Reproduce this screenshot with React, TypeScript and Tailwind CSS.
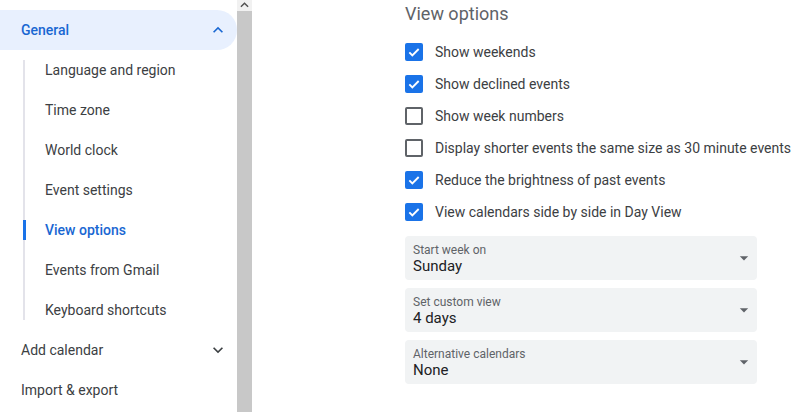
const font = { fontFamily: 'Roboto, "Noto Sans", Arial, sans-serif' }

function Chevron({ up, className }: { up?: boolean; className?: string }) {
  return (
    <svg viewBox="0 0 24 24" width="20" height="20" className={className} fill="currentColor">
      {up ? (
        <path d="M12 8l-6 6 1.41 1.41L12 10.83l4.59 4.58L18 14z" />
      ) : (
        <path d="M16.59 8.59L12 13.17 7.41 8.59 6 10l6 6 6-6z" />
      )}
    </svg>
  )
}

function Checkbox({ checked }: { checked: boolean }) {
  if (checked) {
    return (
      <div className="w-[18px] h-[18px] rounded-[2px] bg-[#1a73e8] flex items-center justify-center shrink-0">
        <svg viewBox="0 0 24 24" width="16" height="16" fill="none" stroke="white" strokeWidth="2.8">
          <path d="M5 12.5l4.5 4.5L19 7.5" />
        </svg>
      </div>
    )
  }
  return <div className="w-[18px] h-[18px] rounded-[2px] border-2 border-[#5f6368] shrink-0" />
}

function Select({ label, value }: { label: string; value: string }) {
  return (
    <div className="w-[352px] h-[44px] rounded-[4px] bg-[#f1f3f4] flex items-center justify-between pl-[8px] pr-[3px]">
      <div className="flex flex-col pt-[1px]">
        <span className="text-[12px] leading-[16px] text-[#5f6368]">{label}</span>
        <span className="text-[15px] leading-[17px] text-[#202124]">{value}</span>
      </div>
      <svg viewBox="0 0 24 24" width="20" height="20" fill="#5f6368">
        <path d="M7 10l5 5 5-5z" />
      </svg>
    </div>
  )
}

const subItems = [
  'Language and region',
  'Time zone',
  'World clock',
  'Event settings',
  'View options',
  'Events from Gmail',
  'Keyboard shortcuts',
]

const options = [
  { label: 'Show weekends', checked: true },
  { label: 'Show declined events', checked: true },
  { label: 'Show week numbers', checked: false },
  { label: 'Display shorter events the same size as 30 minute events', checked: false },
  { label: 'Reduce the brightness of past events', checked: true },
  { label: 'View calendars side by side in Day View', checked: true },
]

export default function App() {
  return (
    <div className="flex h-[412px] w-[799px] overflow-hidden bg-white" style={font}>
      {/* Sidebar */}
      <aside className="w-[237px] shrink-0 pt-[10px]">
        <div className="h-[40px] rounded-r-full bg-[#e8f0fe] flex items-center justify-between pl-[21px] pr-[9px]">
          <span className="text-[14px] font-medium text-[#1967d2]">General</span>
          <Chevron up className="text-[#1967d2]" />
        </div>
        <div className="relative ml-[23px]">
          <div className="absolute left-0 top-[10px] bottom-[10px] w-[2px] bg-[#e3e3ea]" />
          {subItems.map((item) => {
            const active = item === 'View options'
            return (
              <div key={item} className="relative h-[40px] flex items-center pl-[22px]">
                {active && <div className="absolute left-0 top-[10px] w-[3px] h-[20px] bg-[#1a73e8]" />}
                <span
                  className={
                    active
                      ? 'text-[14px] font-medium text-[#1967d2]'
                      : 'text-[14px] text-[#3c4043]'
                  }
                >
                  {item}
                </span>
              </div>
            )
          })}
        </div>
        <div className="h-[40px] flex items-center justify-between pl-[21px] pr-[9px]">
          <span className="text-[14px] text-[#3c4043]">Add calendar</span>
          <Chevron className="text-[#3c4043]" />
        </div>
        <div className="h-[40px] flex items-center pl-[21px]">
          <span className="text-[14px] text-[#3c4043]">Import &amp; export</span>
        </div>
      </aside>

      {/* Scrollbar */}
      <div className="w-[15px] shrink-0 flex flex-col bg-[#f1f1f1]">
        <div className="h-[11px] flex items-start justify-center">
          <svg viewBox="0 0 10 6" width="9" height="6" className="mt-[2px]" fill="none" stroke="#505050" strokeWidth="1.6">
            <path d="M1 5l4-4 4 4" />
          </svg>
        </div>
        <div className="flex-1 bg-[#c8c8c8]" />
      </div>

      {/* Main */}
      <main className="flex-1 pl-[153px] pt-[2px]">
        <h2 className="text-[18px] leading-[24px] text-[#5f6368]">View options</h2>
        <div className="mt-[10px] flex flex-col">
          {options.map((o) => (
            <div key={o.label} className="h-[32px] flex items-center gap-[12px]">
              <Checkbox checked={o.checked} />
              <span className="text-[14px] text-[#3c4043] whitespace-nowrap">{o.label}</span>
            </div>
          ))}
        </div>
        <div className="mt-[8px] flex flex-col gap-[8px]">
          <Select label="Start week on" value="Sunday" />
          <Select label="Set custom view" value="4 days" />
          <Select label="Alternative calendars" value="None" />
        </div>
      </main>
    </div>
  )
}
